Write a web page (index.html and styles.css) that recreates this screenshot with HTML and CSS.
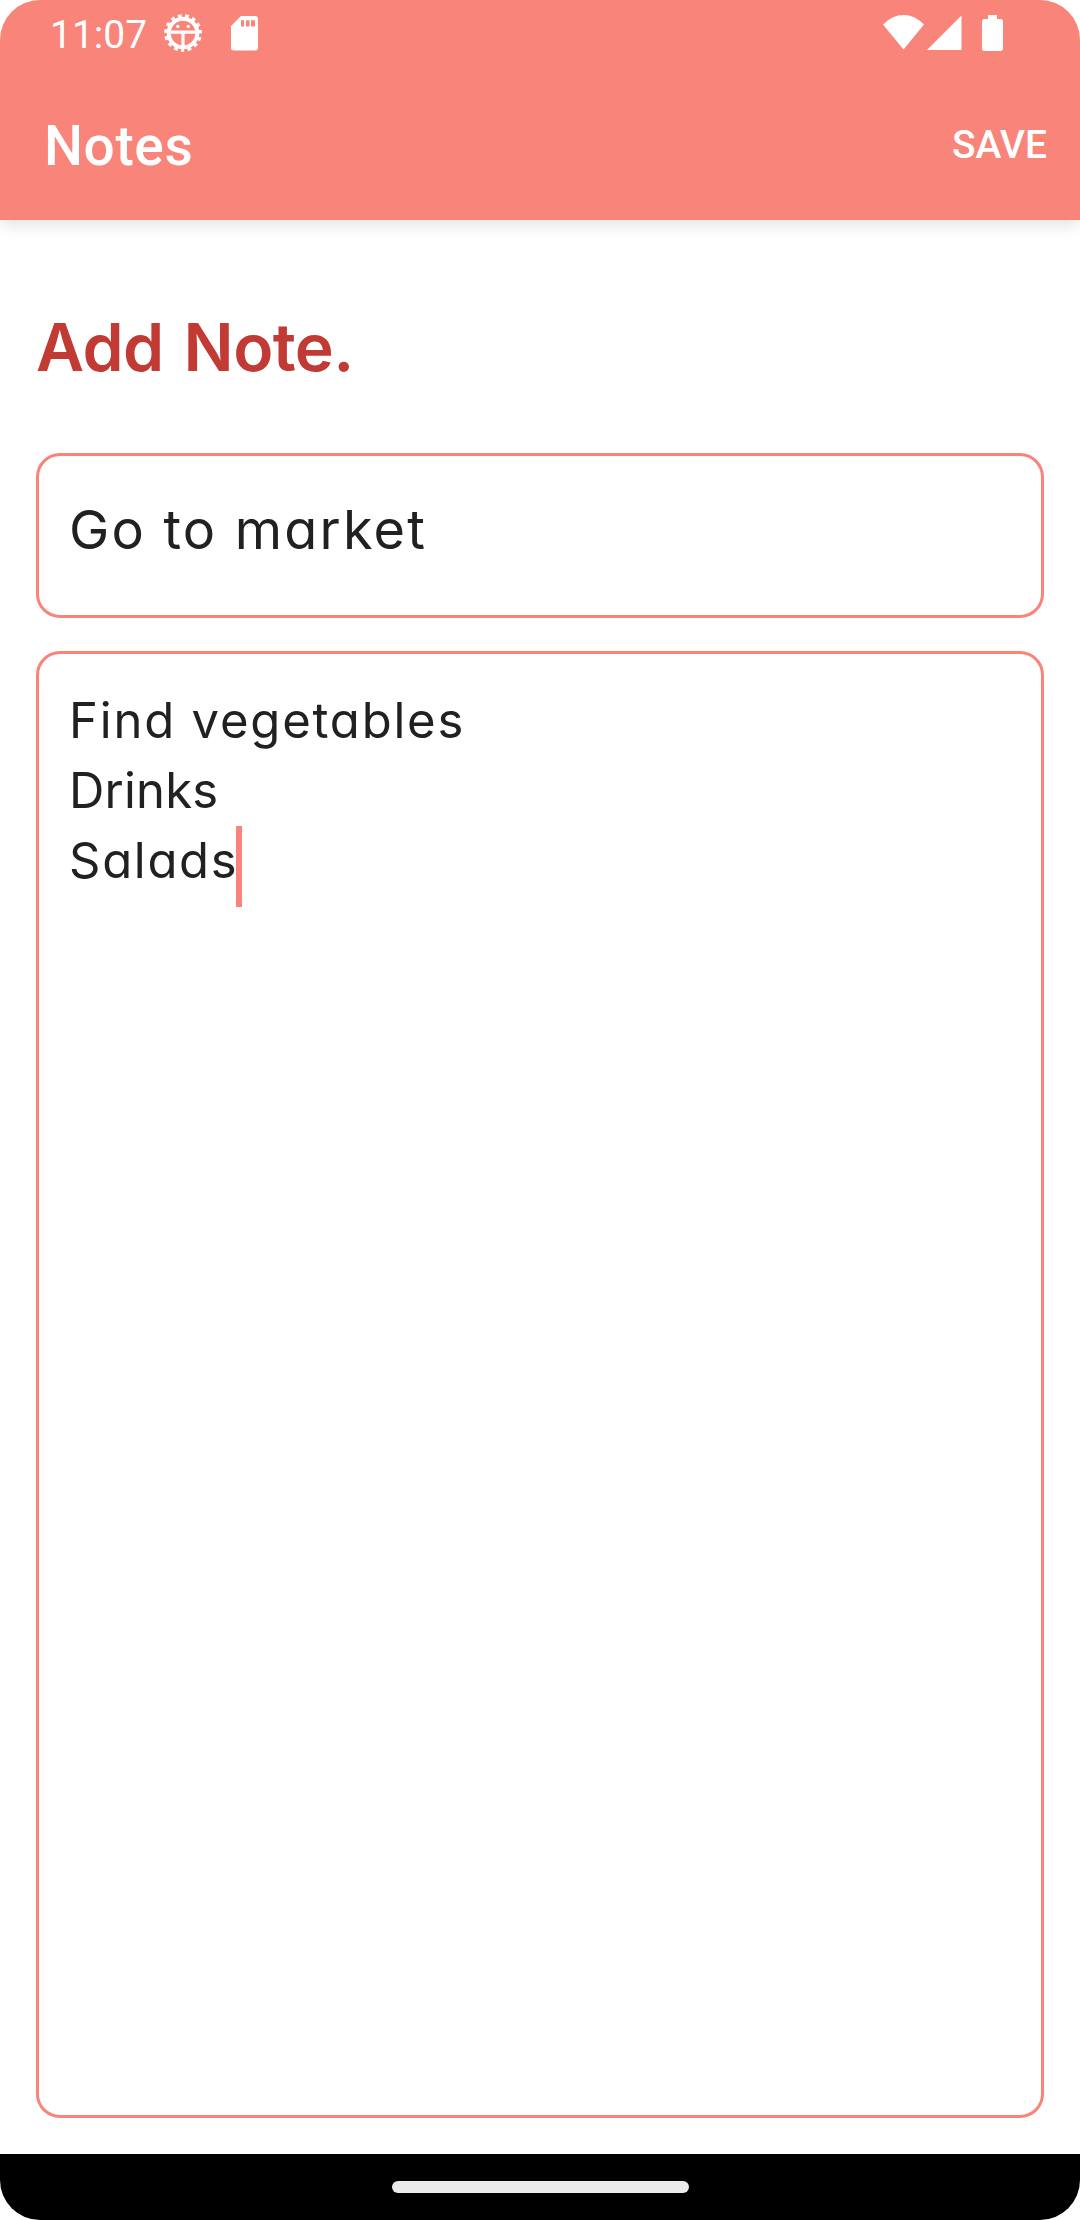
FILE: index.html
```html
<!DOCTYPE html>
<html lang="en">
<head>
<meta charset="utf-8">
<title>Notes</title>
<link rel="stylesheet" href="styles.css">
</head>
<body>
<div class="screen">
  <header class="top">
    <div class="status">
      <div class="status-group">
        <span class="clock">11:07</span>
        <svg class="icon-debug" width="40" height="40" viewBox="0 0 40 40">
          <circle cx="20" cy="20" r="14.300" fill="none" stroke="#fff" stroke-width="4"/>
          <circle cx="20" cy="20" r="16.800" fill="none" stroke="#fff" stroke-width="4.200" stroke-dasharray="3.600 3.437" stroke-dashoffset="1.800" transform="rotate(90 20 20)"/>
          <path d="M6 19.200H34M20 20V34" stroke="#fff" stroke-width="3.200" fill="none"/>
          <circle cx="14.800" cy="13.400" r="1.700" fill="#fff"/>
          <circle cx="25.200" cy="13.400" r="1.700" fill="#fff"/>
        </svg>
        <svg class="icon-sd" width="27" height="35" viewBox="0 0 27 35">
          <path fill="#fff" fill-rule="evenodd" d="M10 0H24Q27 0 27 3V32Q27 34.500 24 34.500H3Q0 34.500 0 32V10ZM10 4.200V10.500H13V4.200ZM15 4.200V10.500H18.500V4.200ZM20 4.200V10.500H24V4.200Z"/>
        </svg>
      </div>
      <div class="status-group">
        <svg width="41" height="35" viewBox="0 0 41 35"><path fill="#fff" d="M0 9.500Q9 0 20.500 0T41 9.500L20.500 34.500Z"/></svg>
        <svg class="icon-cell" width="35" height="35" viewBox="0 0 35 35"><path fill="#fff" d="M34.500 .5V35H0Z"/></svg>
        <svg class="icon-battery" width="21" height="36" viewBox="0 0 21 36"><path fill="#fff" d="M6 0H15V4H18.500Q21 4 21 6.500V33.500Q21 36 18.500 36H2.500Q0 36 0 33.500V6.500Q0 4 2.500 4H6Z"/></svg>
      </div>
    </div>
    <div class="appbar">
      <span class="app-title">Notes</span>
      <span class="save">SAVE</span>
    </div>
  </header>
  <main class="content">
    <h1 class="heading">Add Note.</h1>
    <div class="field field-title"><p class="title-text">Go to market</p></div>
    <div class="field field-body">
      <p class="line line-first">Find vegetables</p>
      <p class="line line-second">Drinks</p>
      <p class="line line-third">Salads<span class="caret"></span></p>
    </div>
  </main>
  <footer class="nav"><div class="pill"></div></footer>
</div>
</body>
</html>
```
FILE: styles.css
```css
* { box-sizing: border-box; margin: 0; }
body { background: #fff; }
svg { display: block; flex: none; }

.screen {
  display: flex;
  flex-direction: column;
  width: 1080px;
  height: 2220px;
  overflow: hidden;
  border-radius: 40px;
  background: #fff;
  font-family: Inter, "Open Sans", sans-serif;
  font-feature-settings: "cv11" 1;
  color: #212121;
}

.top {
  height: 220px;
  background: #f98479;
  color: #fff;
  font-family: Roboto, sans-serif;
  box-shadow: 0 4px 16px rgba(0, 0, 0, .13);
}
.status {
  display: flex;
  justify-content: space-between;
  height: 66px;
  padding: 0 77px 0 50px;
}
.status-group { display: flex; align-items: flex-start; padding-top: 15px; }
.clock { width: 113px; line-height: 40px; font-size: 39px; }
.icon-debug { margin-top: -2px; }
.icon-sd { margin: 1px 0 0 28px; }
.icon-cell { margin-left: 3px; }
.icon-battery { margin-left: 20px; }

.appbar {
  display: flex;
  justify-content: space-between;
  align-items: center;
  height: 154px;
  padding: 4px 33px 0 44px;
  font-weight: 500;
}
.app-title { font-size: 55px; line-height: 64px; padding-top: 2px; letter-spacing: .6px; }
.save { font-size: 39px; line-height: 44px; }

.content {
  flex: 1;
  display: flex;
  flex-direction: column;
  padding: 87px 36px 36px;
}
.heading {
  height: 146px;
  line-height: 80px;
  font-size: 66px;
  font-weight: 600;
  letter-spacing: -.6px;
  word-spacing: 4px;
  color: #c23a34;
}
.field { border: 3px solid #f98479; border-radius: 24px; padding: 0 30px; }
.field-title { height: 165px; padding-top: 39px; margin-bottom: 33px; }
.title-text { font-size: 54px; line-height: 70px; letter-spacing: 2.2px; }
.field-body { flex: 1; padding-top: 32px; }
.line { display: flex; height: 70px; line-height: 70px; font-size: 49px; }
.line-first { letter-spacing: 1.8px; }
.line-second { letter-spacing: .2px; }
.line-third { letter-spacing: 1.7px; }
.caret { width: 6px; height: 81px; margin-left: -2px; background: #f98479; }

.nav {
  display: flex;
  justify-content: center;
  align-items: center;
  height: 66px;
  background: #000;
}
.pill { width: 297px; height: 12px; border-radius: 6px; background: #ebebeb; }
```
